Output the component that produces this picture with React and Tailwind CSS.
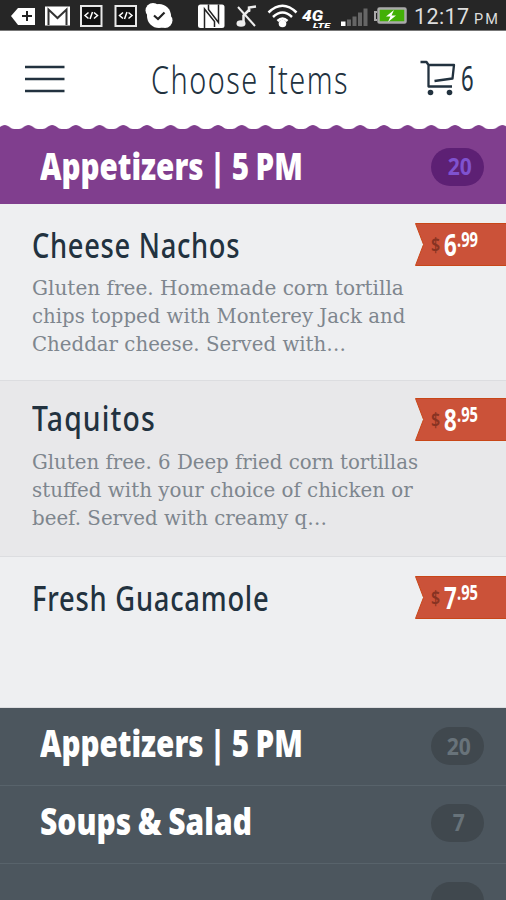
const sections = [
    { name: "Appetizers | 5 PM", count: "20", scale: "scale-x-[0.8]", row: "pb-[3px]", pill: "top-[1px]" },
    { name: "Soups & Salad", count: "7", scale: "scale-x-[0.81]", row: "pb-[4px]", pill: "" },
    { name: "", count: "", scale: "scale-x-[0.8]", row: "pb-[4px]", pill: "" },
];

const items = [
    {
        name: "Cheese Nachos",
        dollars: "6",
        cents: ".99",
        lines: [
            { text: "Gluten free. Homemade corn tortilla", scale: "scale-x-[1.003]" },
            { text: "chips topped with Monterey Jack and", scale: "scale-x-[0.985]" },
            { text: "Cheddar cheese. Served with…", scale: "scale-x-[0.988]" },
        ],
        box: "h-[177px] bg-[#eeeff1] pt-[19px]",
        lead: "leading-[43px]",
        body: "pt-px",
        scale: "scale-x-[0.78] tracking-[0.9px]",
    },
    {
        name: "Taquitos",
        dollars: "8",
        cents: ".95",
        lines: [
            { text: "Gluten free. 6 Deep fried corn tortillas", scale: "scale-x-[0.987]" },
            { text: "stuffed with your choice of chicken or", scale: "scale-x-[0.993]" },
            { text: "beef. Served with creamy q…", scale: "scale-x-[0.99]" },
        ],
        box: "h-[176px] bg-[#e8e8ea] pt-[17px]",
        lead: "leading-[40px]",
        body: "",
        scale: "scale-x-[0.81] tracking-[1.4px]",
    },
    {
        name: "Fresh Guacamole",
        dollars: "7",
        cents: ".95",
        lines: [],
        box: "h-[151px] bg-[#eeeff1] pt-[19px]",
        lead: "leading-[43px]",
        body: "",
        scale: "scale-x-[0.78] tracking-[1px]",
    },
];

const StatusBar = () => (
    <div className="h-[31px] bg-[#262626] border-b border-[#777] flex items-center">
        <svg width="506" height="30" viewBox="0 0 506 30" fill="none">
            <path d="M11 16 L18 8 H35 V25 H18 Z" fill="#fff" />
            <path d="M22 16 H32 M27 11 V21" stroke="#222" strokeWidth="2" />
            <rect x="45" y="6.500" width="25" height="19" fill="#fff" />
            <path d="M48.500 25 V9.500 L57.500 18 L66.500 9.500 V25" stroke="#333" strokeWidth="2" />
            {[80, 114.500].map((x) => (
                <g key={x} transform={`translate(${x} 5)`}>
                    <rect x="1" y="1" width="20.500" height="20" fill="#111" stroke="#e8e8e8" strokeWidth="2" />
                    <path d="M8.500 7.500 L5 10.500 L8.500 13.500 M14 7.500 L17.500 10.500 L14 13.500 M12.500 7 L10 14" stroke="#fff" strokeWidth="1.500" />
                </g>
            ))}
            <circle cx="159" cy="16" r="12" fill="#fff" />
            <circle cx="153" cy="10.500" r="7.500" fill="#fff" />
            <circle cx="165" cy="20.500" r="7.500" fill="#fff" />
            <path d="M154 15.500 L158 19 L164.500 12.500" stroke="#222" strokeWidth="2.200" />
            <rect x="198" y="4.500" width="26.500" height="23.500" rx="2.500" fill="#fff" />
            <path d="M204.500 28 V9 L214.500 21.500 V27" stroke="#222" strokeWidth="1.500" />
            <path d="M208.500 4.500 V9.500 L218.500 22.500 V4.500" stroke="#222" strokeWidth="1.500" />
            <path d="M238 7 L255 26" stroke="#eee" strokeWidth="2" />
            <path d="M243.500 22 V15.500 L250 9 M249 12 V7.500 L256 6.500" stroke="#eee" strokeWidth="2.500" />
            <ellipse cx="241" cy="23.500" rx="4.500" ry="3.200" fill="#eee" />
            <path d="M268.500 12.500 Q282.500 -1 296.500 12.500 M273 17 Q282.500 8 292 17 M277.500 21 Q282.500 16 287.500 21" stroke="#fff" strokeWidth="2.500" />
            <circle cx="282.500" cy="23.500" r="3.800" fill="#fff" />
            <text x="302" y="20.500" fill="#fff" fontFamily="Roboto" fontSize="14" fontWeight="900" fontStyle="italic" textLength="21" lengthAdjust="spacingAndGlyphs">4G</text>
            <text x="313" y="28" fill="#fff" fontFamily="Roboto" fontSize="8" fontWeight="900" fontStyle="italic" textLength="17" lengthAdjust="spacingAndGlyphs">LTE</text>
            <path d="M341 21.500 h4.500 v4.500 h-4.500z" fill="#fff" />
            <path d="M347 19.500 h4 v6.500 h-4z M352.500 16.500 h4 v9.500 h-4z M358 12.500 h4 v13.500 h-4z M363.500 8.500 h4 v17.500 h-4z" fill="#666" />
            <rect x="378.500" y="8.500" width="27" height="14" rx="1" fill="#43b007" stroke="#aaa" strokeWidth="2.500" />
            <path d="M377 12 H375 V20 H377" stroke="#aaa" strokeWidth="2" />
            <path d="M394 10 L386 16.500 H390.500 L388 22 L396 15.500 H391.500 Z" fill="#fff" />
            <text x="414" y="24" fill="#dedede" fontFamily="Roboto" fontSize="21.500" textLength="55" lengthAdjust="spacing">12:17</text>
            <text x="474" y="24" fill="#dedede" fontFamily="Roboto" fontSize="14.500" textLength="24" lengthAdjust="spacing">PM</text>
        </svg>
    </div>
);

const Scallops = () => (
    <svg className="absolute left-0 -top-1" width="506" height="5">
        <defs>
            <pattern id="scallop" x="-7.100" width="23.700" height="5" patternUnits="userSpaceOnUse">
                <path d="M0 5 V4 H2.500 C6 4 8 0 11.850 0 C15.700 0 17.700 4 21.200 4 H23.700 V5 Z" fill="#803e8e" />
            </pattern>
        </defs>
        <rect width="506" height="5" fill="url(#scallop)" />
    </svg>
);

const PriceTag = ({ dollars, cents }) => (
    <div className="relative ml-auto w-[91px] h-[43px] shrink-0">
        <svg className="absolute inset-0" width="91" height="43" viewBox="0 0 91 43">
            <path d="M0.500 0.500 H93 V42.500 H0.500 L8.500 21.500 Z" fill="#cb5239" stroke="#c84618" />
        </svg>
        <div className="relative flex pl-[16px] pt-[2px] font-bold leading-none whitespace-nowrap">
            <span className="w-[13px] pt-[10px] text-[20px] text-[#873322] font-semibold scale-x-[0.8] origin-left">$</span>
            <span className="w-[13px] pt-[4px] text-[31px] text-white scale-x-[0.72] origin-left">{dollars}</span>
            <span className="pt-[4px] text-[21px] text-white scale-x-[0.7] origin-left">{cents}</span>
        </div>
    </div>
);

const MenuItem = ({ item }) => (
    <div className={`${item.box} border-b border-[#dcdde0]`}>
        <div className="flex h-[51px]">
            <h2 className={`pl-[32px] w-[300px] h-[43px] ${item.lead} text-[35px] font-medium text-[#22323f] whitespace-nowrap`}>
                <span className={`inline-block origin-left ${item.scale}`}>{item.name}</span>
            </h2>
            <PriceTag dollars={item.dollars} cents={item.cents} />
        </div>
        <div className={`pl-[32px] ${item.body} font-['DejaVu_Serif',serif] text-[20px] leading-[27.800px] text-[#7e868e]`}>
            {item.lines.map((line) => (
                <p key={line.text} className={`w-max origin-left ${line.scale}`}>{line.text}</p>
            ))}
        </div>
    </div>
);

const SectionTitle = ({ section }) => (
    <h2 className={`w-max origin-left text-[37px] leading-[50px] font-black [word-spacing:-1.5px] text-white whitespace-nowrap ${section.scale}`}>
        {section.name}
    </h2>
);

const App = () => {
    return (
        <div className="w-[506px] h-[900px] overflow-hidden bg-[#4c565e] font-['Noto_Sans',sans-serif]">
            <StatusBar />
            <header className="h-[98px] bg-white flex items-center text-[#22323f]">
                <svg className="ml-[25px] mt-[-2px]" width="40" height="28">
                    <path d="M0 2 H39.500 M0 14 H39.500 M0 26 H39.500" stroke="#22323f" strokeWidth="2.700" />
                </svg>
                <h1 className="ml-[86px] mt-[-3px] w-[268px] text-[39px] leading-[50px] font-light whitespace-nowrap">
                    <span className="inline-block origin-left scale-x-[0.74] tracking-[2px]">Choose Items</span>
                </h1>
                <svg className="mt-[-4px]" width="38" height="36" viewBox="0 0 38 36" fill="none" stroke="#22323f">
                    <path d="M1.500 2 H7.500 L9.500 5 V26.500 H33 M9.500 5 H35 L33.500 18.500 L15.500 21" strokeWidth="2.300" strokeLinejoin="round" />
                    <circle cx="11.500" cy="32.500" r="2.800" fill="#22323f" stroke="none" />
                    <circle cx="30.500" cy="32.500" r="2.800" fill="#22323f" stroke="none" />
                </svg>
                <span className="ml-[4px] mt-[-4px] text-[34px] leading-[50px] origin-left scale-x-[0.65]">6</span>
            </header>
            <div className="relative h-[75px] bg-[#803e8e] flex items-center pl-[40px]">
                <Scallops />
                <div className="w-[391px] pb-[2px]">
                    <SectionTitle section={sections[0]} />
                </div>
                <div className="w-[53px] h-[38px] rounded-full bg-[#5d2074] flex items-center justify-center pl-[4px] pb-px text-[24px] font-bold text-[#7f52cf]">
                    <span className="scale-x-[0.88]">20</span>
                </div>
            </div>
            <main>
                {items.map((item) => (
                    <MenuItem key={item.name} item={item} />
                ))}
            </main>
            {sections.map((section) => (
                <div key={section.name} className={`h-[78px] border-b border-[#58636b] flex items-center pl-[40px] ${section.row}`}>
                    <div className="w-[391px] pb-[4px]">
                        <SectionTitle section={section} />
                    </div>
                    <div className={`relative ${section.pill} w-[53px] h-[38px] rounded-full bg-[#40484e] flex items-center justify-center pl-[3px] pb-px text-[24px] font-bold text-[#68737a]`}>
                        <span className="scale-x-[0.88]">{section.count}</span>
                    </div>
                </div>
            ))}
        </div>
    );
};

export default App;
